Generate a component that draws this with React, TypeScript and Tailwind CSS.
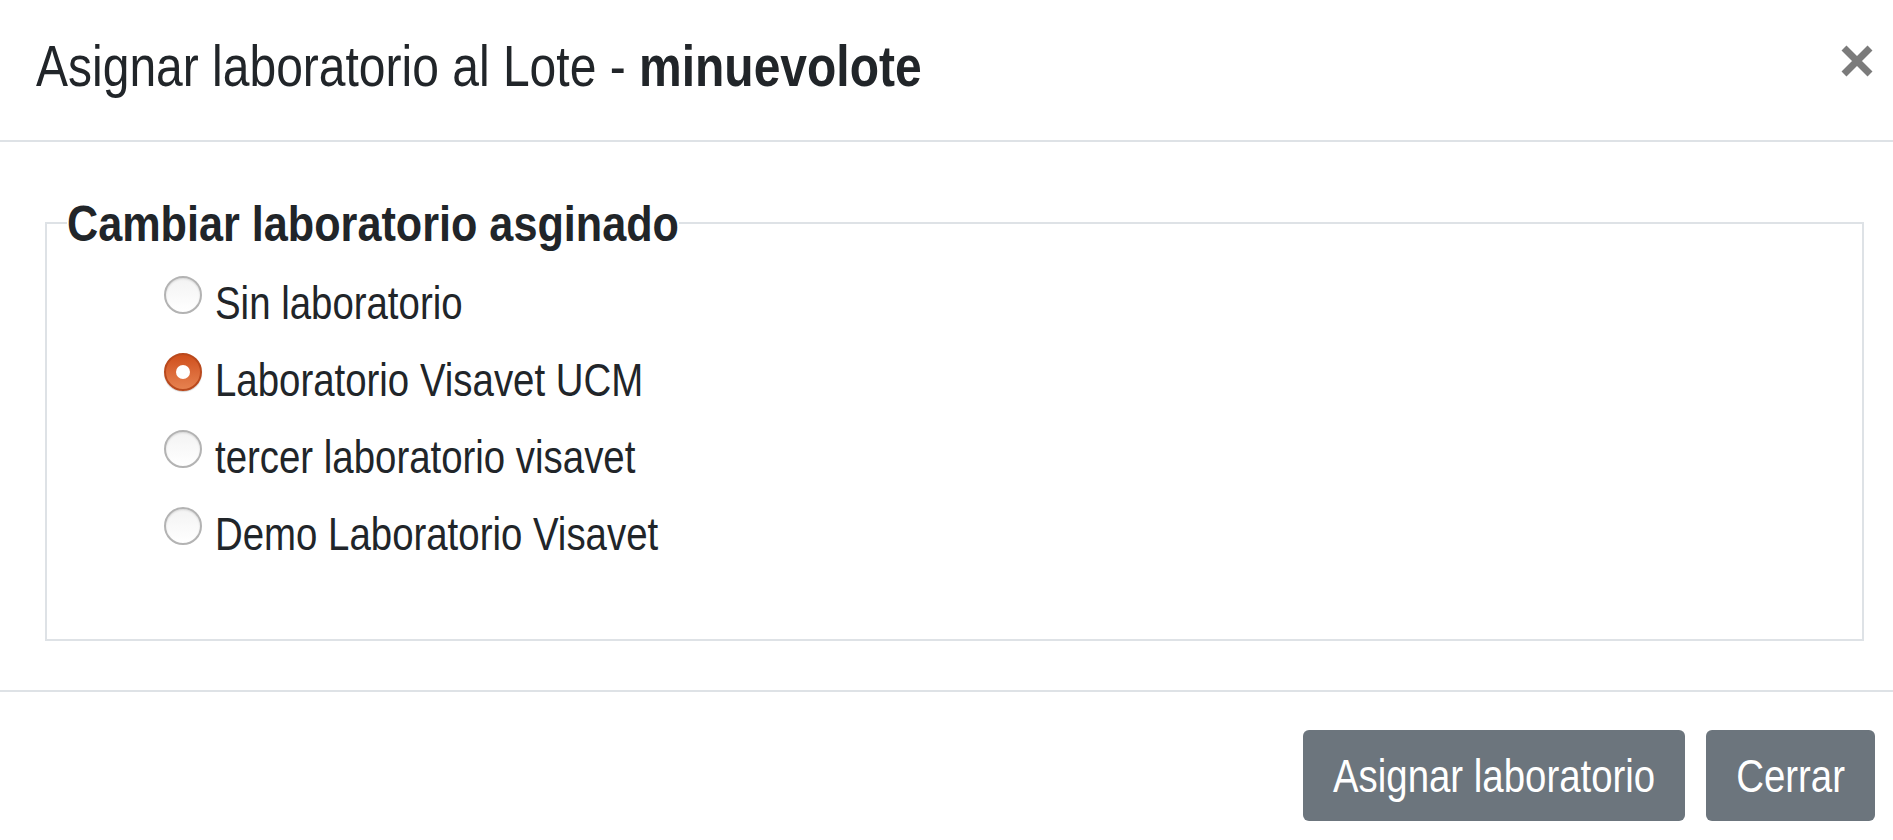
import React from "react";

const labs = [
  { name: "Sin laboratorio", checked: false },
  { name: "Laboratorio Visavet UCM", checked: true },
  { name: "tercer laboratorio visavet", checked: false },
  { name: "Demo Laboratorio Visavet", checked: false },
];

function Radio({ checked }: { checked: boolean }) {
  if (checked) {
    return (
      <span className="mt-[1px] flex h-[38px] w-[38px] shrink-0 items-center justify-center rounded-full border-2 border-[#b9491d] bg-linear-to-b from-[#cf4f1b] to-[#e6814f] shadow-[0_1px_1px_rgba(0,0,0,0.2)]">
        <span className="h-[14px] w-[14px] rounded-full bg-white" />
      </span>
    );
  }
  return (
    <span className="mt-[1px] block h-[38px] w-[38px] shrink-0 rounded-full border-2 border-[#b3b3b3] bg-linear-to-b from-[#f3f3f3] to-white shadow-[inset_0_1px_2px_rgba(0,0,0,0.12)]" />
  );
}

export default function App() {
  return (
    <div className="h-[840px] w-[1893px] overflow-hidden bg-white font-['Liberation_Sans',Arial,sans-serif] text-[#212529]">
      <div className="flex items-start justify-between border-b-2 border-[#dee2e6] pb-[37px] pl-[36px] pr-[19px] pt-[31px]">
        <h5 className="scale-y-[1.2] text-[48px] font-normal leading-[72px]">
          Asignar laboratorio al Lote - <b className="font-bold">minuevolote</b>
        </h5>
        <svg width="34" height="34" viewBox="0 0 34 34" className="mt-[13px]">
          <path d="M4 4 L30 30 M30 4 L4 30" stroke="#7b7b7b" strokeWidth="7" strokeLinecap="butt" />
        </svg>
      </div>

      <div className="pb-[49px] pl-[45px] pr-[29px] pt-[49px]">
        <fieldset className="h-[450px] border-2 border-[#dee2e6] px-[20px]">
          <legend className="scale-y-[1.17] p-0 text-[43.2px] font-bold leading-[64px]">Cambiar laboratorio asginado</legend>
          <div className="flex flex-col pl-[97px] pt-[20px]">
            {labs.map((l) => (
              <label key={l.name} className="mb-[19px] flex items-start">
                <Radio checked={l.checked} />
                <span className="ml-[13px] -translate-y-[1px] scale-y-[1.2] text-[38.4px] leading-[58px]">{l.name}</span>
              </label>
            ))}
          </div>
        </fieldset>
      </div>

      <div className="flex justify-end gap-[21px] border-t-2 border-[#dee2e6] pr-[18px] pt-[38px]">
        <button className="h-[91px] rounded-[6px] bg-[#6c757d] px-[30px] text-[38.4px] text-white">
          <span className="inline-block scale-y-[1.2]">Asignar laboratorio</span>
        </button>
        <button className="h-[91px] rounded-[6px] bg-[#6c757d] px-[30px] text-[38.4px] text-white">
          <span className="inline-block scale-y-[1.2]">Cerrar</span>
        </button>
      </div>
    </div>
  );
}
